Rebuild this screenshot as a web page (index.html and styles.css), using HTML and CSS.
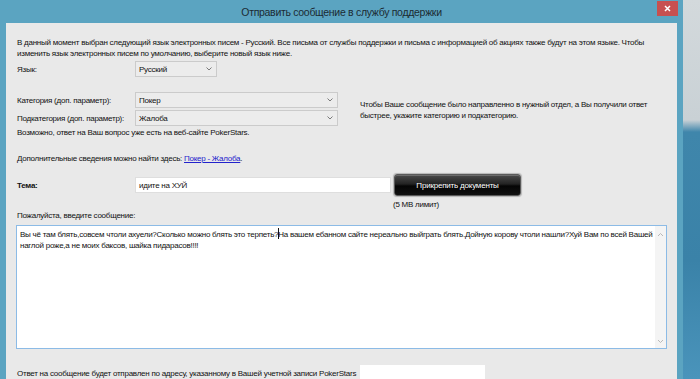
FILE: index.html
```html
<!DOCTYPE html>
<html lang="ru">
<head>
    <meta charset="UTF-8">
    <title>Отправить сообщение в службу поддержки</title>
    <link rel="stylesheet" href="styles.css">
</head>
<body>
    <div class="window">
        <div class="titlebar">
            <span class="title">Отправить сообщение в службу поддержки</span>
            <span class="close">
                <svg width="7" height="7" viewBox="0 0 7 7"><path d="M1 1L6 6M6 1L1 6" stroke="#fff" stroke-width="1.5"/></svg>
            </span>
        </div>

        <div class="content">
            <p class="intro">В данный момент выбран следующий язык электронных писем - Русский. Все письма от службы поддержки и письма с информацией об акциях также будут на этом языке. Чтобы<br>изменить язык электронных писем по умолчанию, выберите новый язык ниже.</p>

            <div class="field lang">
                <span class="label">Язык:</span>
                <div class="select small">
                    <span>Русский</span>
                    <svg class="chev" width="6" height="4" viewBox="0 0 6 4"><path d="M0.5 0.5L3 3L5.5 0.5" fill="none" stroke="#7a7a7a"/></svg>
                </div>
            </div>

            <div class="category">
                <div class="category-fields">
                    <div class="field">
                        <span class="label">Категория (доп. параметр):</span>
                        <div class="select wide">
                            <span>Покер</span>
                            <svg class="chev" width="6" height="4" viewBox="0 0 6 4"><path d="M0.5 0.5L3 3L5.5 0.5" fill="none" stroke="#7a7a7a"/></svg>
                        </div>
                    </div>
                    <div class="field">
                        <span class="label">Подкатегория (доп. параметр):</span>
                        <div class="select wide">
                            <span>Жалоба</span>
                            <svg class="chev" width="6" height="4" viewBox="0 0 6 4"><path d="M0.5 0.5L3 3L5.5 0.5" fill="none" stroke="#7a7a7a"/></svg>
                        </div>
                    </div>
                </div>
                <p class="hint">Чтобы Ваше сообщение было направленно в нужный отдел, а Вы получили ответ<br>быстрее, укажите категорию и подкатегорию.</p>
            </div>

            <p class="note">Возможно, ответ на Ваш вопрос уже есть на веб-сайте PokerStars.</p>
            <p class="note more">Дополнительные сведения можно найти здесь: <a href="#">Покер - Жалоба</a>.</p>

            <div class="field subject">
                <span class="label strong">Тема:</span>
                <div class="input">идите на ХУЙ</div>
                <button type="button" class="attach">Прикрепить документы</button>
            </div>
            <p class="limit">(5 MB лимит)</p>

            <p class="prompt">Пожалуйста, введите сообщение:</p>
            <div class="message">
                <div class="message-text">Вы чё там блять,совсем чтоли ахуели?Сколько можно блять это терпеть?<span class="caret"></span>На вашем ебанном сайте нереально выйграть блять.Дойную корову чтоли нашли?Хуй Вам по всей Вашей<br>наглой роже,а не моих баксов, шайка пидарасов!!!!</div>
                <div class="scrollbar">
                    <svg width="7" height="5" viewBox="0 0 7 5"><path d="M1 4L3.5 1.5L6 4" fill="none" stroke="#b8b8b8"/></svg>
                    <svg width="7" height="5" viewBox="0 0 7 5"><path d="M1 1L3.5 3.5L6 1" fill="none" stroke="#b8b8b8"/></svg>
                </div>
            </div>

            <div class="footer">
                <span>Ответ на сообщение будет отправлен по адресу, указанному в Вашей учетной записи PokerStars</span>
                <span class="email"></span>
            </div>
        </div>
    </div>
</body>
</html>
```

FILE: styles.css
```css
body {
    margin: 0;
    width: 700px;
    height: 379px;
    overflow: hidden;
    font-family: "Liberation Sans", Arial, sans-serif;
    background: linear-gradient(180deg, #d3d9dc 0, #c9d1d5 120px, #3f86ab 132px, #3a82a8 260px, #4a94bb 100%);
}

.window {
    width: 683px;
    height: 379px;
    overflow: hidden;
    background: #5ba4c1;
    display: flex;
    flex-direction: column;
}

.titlebar {
    height: 23px;
    flex: none;
    display: grid;
    grid-template-columns: 1fr auto 1fr;
    align-items: center;
}

.title {
    grid-column: 2;
    font-size: 10.5px;
    letter-spacing: -0.3px;
    color: #1c2b33;
}

.close {
    grid-column: 3;
    justify-self: end;
    align-self: start;
    margin: 1px 5px 0 0;
    width: 21px;
    height: 15px;
    background: #c75050;
    display: flex;
    align-items: center;
    justify-content: center;
}

.content {
    flex: 1;
    margin: 0 6px;
    padding: 0 10px 0 11px;
    background: #e9e9e9;
    font-size: 8px;
    letter-spacing: -0.25px;
    line-height: 11px;
    color: #111;
}

p {
    margin: 0;
}

.intro {
    padding-top: 14px;
    white-space: nowrap;
}

.field {
    display: grid;
    grid-template-columns: 118px max-content max-content;
    justify-content: start;
    align-items: center;
}

.label {
    white-space: nowrap;
}

.lang {
    margin-top: 2px;
}

.select {
    box-sizing: border-box;
    height: 16px;
    padding: 0 4px 0 3px;
    background: #ececec;
    border: 1px solid #cbcbcb;
    display: flex;
    align-items: center;
    justify-content: space-between;
}

.select.small {
    width: 82px;
}

.select.wide {
    width: 203px;
}

.category {
    margin-top: 15px;
    display: flex;
    align-items: center;
}

.category-fields {
    display: flex;
    flex-direction: column;
    gap: 2px;
}

.hint {
    margin-left: 22px;
    padding-top: 1px;
    white-space: nowrap;
}

.note {
    margin-top: 1px;
}

.note.more {
    margin-top: 15px;
}

a {
    color: #2222cc;
}

.subject {
    margin-top: 10px;
}

.strong {
    font-weight: bold;
}

.input {
    box-sizing: border-box;
    width: 256px;
    height: 16px;
    padding-left: 3px;
    background: #fff;
    border: 1px solid #dedede;
    display: flex;
    align-items: center;
}

.attach {
    margin-left: 3px;
    width: 127px;
    height: 22px;
    padding: 0;
    font-family: inherit;
    font-size: 8px;
    letter-spacing: -0.2px;
    color: #fff;
    border: 1px solid #5a5a5a;
    border-radius: 3px;
    background: linear-gradient(180deg, #4a4a4a 0, #232323 45%, #050505 55%, #111 100%);
    box-shadow: inset 0 1px 0 rgba(255, 255, 255, 0.2), 0 0 1px 1px #b5b5b5;
}

.limit {
    margin: 3px 0 0 376px;
}

.message {
    box-sizing: border-box;
    margin: 4px 0 0 -1px;
    width: 651px;
    height: 124px;
    background: #fff;
    border: 1px solid #8cbbe6;
    display: flex;
}

.message-text {
    flex: 1;
    padding: 2px 3px;
    white-space: nowrap;
    overflow: hidden;
}

.caret {
    display: inline-block;
    width: 1px;
    height: 11px;
    margin-right: -1px;
    vertical-align: -2px;
    background: #111;
}

.scrollbar {
    width: 11px;
    background: #f4f4f4;
    display: flex;
    flex-direction: column;
    justify-content: space-between;
    align-items: center;
    padding: 6px 0 4px;
}

.footer {
    margin-top: 16px;
    display: flex;
    align-items: center;
    gap: 4px;
}

.email {
    width: 125px;
    height: 16px;
    background: #fff;
}
```
